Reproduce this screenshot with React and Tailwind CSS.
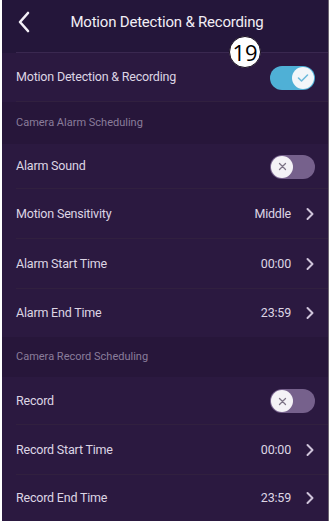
import React from "react";

const Chevron = () => (
  <svg width="10" height="14" viewBox="0 0 10 14" className="ml-[14px]">
    <path d="M2.5 2 L7.5 7 L2.5 12" fill="none" stroke="#cfc4da" strokeWidth="2" strokeLinecap="round" strokeLinejoin="round" />
  </svg>
);

const ToggleOn = () => (
  <div className="w-[45px] h-[24px] rounded-full bg-[#4fb0d6] flex items-center justify-end pr-[1px]">
    <div className="w-[22px] h-[22px] rounded-full bg-[#f2f6f9] flex items-center justify-center">
      <svg width="12" height="10" viewBox="0 0 12 10">
        <path d="M1.5 5 L4.5 8 L10.5 2" fill="none" stroke="#6ebadb" strokeWidth="1.6" strokeLinecap="round" strokeLinejoin="round" />
      </svg>
    </div>
  </div>
);

const ToggleOff = () => (
  <div className="w-[45px] h-[24px] rounded-full bg-[#76618c] flex items-center justify-start pl-[1px]">
    <div className="w-[22px] h-[22px] rounded-full bg-[#f4f2f6] flex items-center justify-center">
      <svg width="9" height="9" viewBox="0 0 9 9">
        <path d="M1.5 1.5 L7.5 7.5 M7.5 1.5 L1.5 7.5" fill="none" stroke="#7d7486" strokeWidth="1.3" strokeLinecap="round" />
      </svg>
    </div>
  </div>
);

const Row = ({ label, h, right, divider = true }) => (
  <div className={`relative flex items-center justify-between pl-[14px] pr-[13px] bg-[#2b1940] ${h}`}>
    <span className="text-[12.5px] tracking-[-0.2px] text-[#ddd5e4]">{label}</span>
    <div className="flex items-center">{right}</div>
    {divider && <div className="absolute left-[14px] right-0 bottom-0 h-px bg-[#31203f]" />}
  </div>
);

const Value = ({ v }) => (
  <>
    <span className="text-[12.5px] tracking-[-0.2px] text-[#ddd5e4]">{v}</span>
    <Chevron />
  </>
);

const Section = ({ label, h }) => (
  <div className={`flex items-center pl-[14px] bg-[#27163a] ${h}`}>
    <span className="text-[11px] text-[#8a7d9b]">{label}</span>
  </div>
);

export default function App() {
  return (
    <div className="w-[333px] h-[528px] bg-white overflow-hidden" style={{ fontFamily: "Roboto, 'Liberation Sans', sans-serif" }}>
      <div className="ml-[2px] w-[327px] h-[521px] bg-[#2b1940] flex flex-col relative border-r border-[#6b6470]">
        <div className="relative h-[53px] bg-[#24163a] flex items-center justify-center">
          <svg width="14" height="22" viewBox="0 0 14 22" className="absolute left-[15px] top-[11px]">
            <path d="M11 2 L3 11 L11 20" fill="none" stroke="#f4f0f7" strokeWidth="2.6" strokeLinecap="round" strokeLinejoin="round" />
          </svg>
          <span className="text-[15px] tracking-[-0.2px] text-[#f2eef5] -mt-[8px] pl-[4px]">Motion Detection &amp; Recording</span>
          <div className="absolute left-[14px] right-0 bottom-0 h-px bg-[#3a2850]" />
        </div>
        <Row label="Motion Detection & Recording" h="h-[49px]" right={<ToggleOn />} />
        <Section label="Camera Alarm Scheduling" h="h-[42px]" />
        <Row label="Alarm Sound" h="h-[45px]" right={<ToggleOff />} />
        <Row label="Motion Sensitivity" h="h-[50px]" right={<Value v="Middle" />} />
        <Row label="Alarm Start Time" h="h-[50px]" right={<Value v="00:00" />} />
        <Row label="Alarm End Time" h="h-[48px]" right={<Value v="23:59" />} divider={false} />
        <Section label="Camera Record Scheduling" h="h-[40px]" />
        <Row label="Record" h="h-[48px]" right={<ToggleOff />} />
        <Row label="Record Start Time" h="h-[50px]" right={<Value v="00:00" />} />
        <Row label="Record End Time" h="h-[46px]" right={<Value v="23:59" />} divider={false} />
        <div className="absolute left-[227px] top-[36px] w-[32px] h-[32px] rounded-full bg-white border border-[#1a1020] flex items-center justify-center">
          <span className="text-[22px] leading-none text-black" style={{ fontFamily: "'Open Sans', sans-serif" }}>19</span>
        </div>
      </div>
    </div>
  );
}
